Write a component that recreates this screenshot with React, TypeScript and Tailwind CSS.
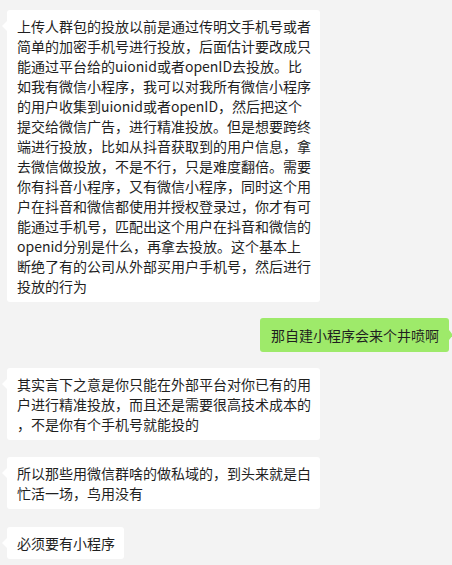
import React from 'react'

type Msg = { side: 'left' | 'right'; lines: string[]; mt: number }

const messages: Msg[] = [
  {
    side: 'left',
    mt: 10,
    lines: [
      '上传人群包的投放以前是通过传明文手机号或者',
      '简单的加密手机号进行投放，后面估计要改成只',
      '能通过平台给的uionid或者openID去投放。比',
      '如我有微信小程序，我可以对我所有微信小程序',
      '的用户收集到uionid或者openID，然后把这个',
      '提交给微信广告，进行精准投放。但是想要跨终',
      '端进行投放，比如从抖音获取到的用户信息，拿',
      '去微信做投放，不是不行，只是难度翻倍。需要',
      '你有抖音小程序，又有微信小程序，同时这个用',
      '户在抖音和微信都使用并授权登录过，你才有可',
      '能通过手机号，匹配出这个用户在抖音和微信的',
      'openid分别是什么，再拿去投放。这个基本上',
      '断绝了有的公司从外部买用户手机号，然后进行',
      '投放的行为',
    ],
  },
  { side: 'right', mt: 16, lines: ['那自建小程序会来个井喷啊'] },
  {
    side: 'left',
    mt: 16,
    lines: [
      '其实言下之意是你只能在外部平台对你已有的用',
      '户进行精准投放，而且还是需要很高技术成本的',
      '，不是你有个手机号就能投的',
    ],
  },
  {
    side: 'left',
    mt: 17,
    lines: ['所以那些用微信群啥的做私域的，到头来就是白', '忙活一场，鸟用没有'],
  },
  { side: 'left', mt: 18, lines: ['必须要有小程序'] },
]

function Bubble({ m }: { m: Msg }) {
  const left = m.side === 'left'
  return (
    <div className={`flex ${left ? 'justify-start pl-[7px]' : 'justify-end pr-[3px]'}`} style={{ marginTop: m.mt }}>
      <div
        className={`relative rounded-[3px] text-[14px] leading-[20px] text-[#1f1f1f] ${
          left ? 'bg-white pl-[10px] pr-[9px] py-[6px]' : 'bg-[#9eea6a] pl-[11px] pr-[10px] py-[7px]'
        }`}
      >
        {left ? (
          <span className="absolute left-[-5px] top-[11px] h-0 w-0 border-y-[5px] border-r-[5px] border-y-transparent border-r-white" />
        ) : (
          <span className="absolute right-[-4px] top-[12px] h-0 w-0 border-y-[5px] border-l-[4px] border-y-transparent border-l-[#9eea6a]" />
        )}
        {m.lines.map((l, i) => (
          <div key={i} className="whitespace-nowrap">
            {l}
          </div>
        ))}
      </div>
    </div>
  )
}

export default function App() {
  return (
    <div
      className="h-[565px] w-[452px] overflow-hidden bg-[#f3f3f3]"
      style={{ fontFamily: '"Noto Sans CJK SC", "Noto Sans", sans-serif' }}
    >
      {messages.map((m, i) => (
        <Bubble key={i} m={m} />
      ))}
    </div>
  )
}
